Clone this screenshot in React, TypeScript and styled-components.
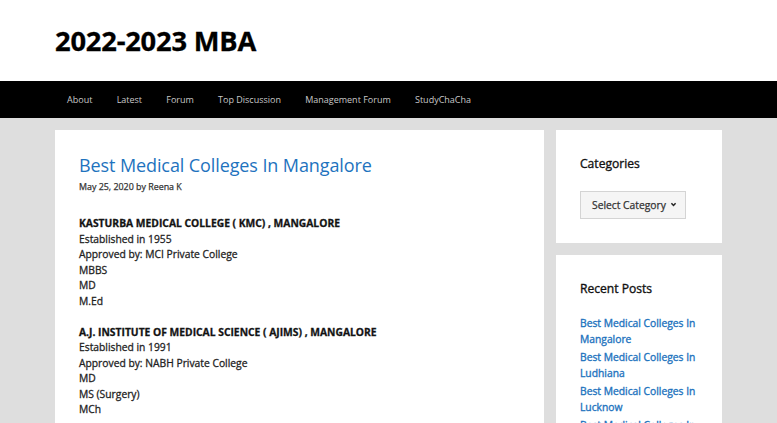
import React from "react";
import styled, { createGlobalStyle } from "styled-components";

const Global = createGlobalStyle`
  html, body { margin: 0; padding: 0; }
  body {
    background: #dedede;
    font-family: "Open Sans", "Liberation Sans", sans-serif;
    color: #222;
    overflow: hidden;
  }
  * { box-sizing: border-box; }
`;

const Header = styled.header`
  background: #fff;
  height: 81px;
  display: flex;
  align-items: center;
`;

const Inner = styled.div`
  width: 667px;
  margin: 0 auto;
`;

const SiteTitle = styled.h1`
  margin: 0;
  padding-top: 1px;
  font-size: 27.3px;
  font-weight: 700;
  line-height: 1;
  color: #000;
  letter-spacing: -0.2px;
  -webkit-text-stroke: 0.3px #000;
`;

const Nav = styled.nav`
  background: #000;
  height: 37px;
`;

const NavList = styled.ul`
  list-style: none;
  margin: 0 auto;
  padding: 0;
  width: 667px;
  display: flex;
  height: 100%;
  align-items: center;
`;

const NavItem = styled.li`
  padding: 0 12.1px;
  font-size: 9px;
  color: #c8c8c8;
  line-height: 37px;
`;

const Main = styled.div`
  width: 667px;
  margin: 12px auto 0;
  display: grid;
  grid-template-columns: 489px 166px;
  column-gap: 12px;
  align-items: start;
`;

const Article = styled.article`
  background: #fff;
  padding: 23.5px 24px 24px;
  min-height: 400px;
`;

const PostTitle = styled.h2`
  margin: 0;
  font-size: 18px;
  font-weight: 400;
  line-height: 22px;
  color: #1e73be;
  letter-spacing: -0.1px;
`;

const Meta = styled.div`
  margin-top: 4.5px;
  font-size: 8.9px;
  line-height: 13px;
  color: #333;
  -webkit-text-stroke: 0.25px #333;
`;

const Body = styled.div`
  margin-top: 23px;
  font-size: 10.3px;
  line-height: 15.5px;
  font-weight: 400;
  color: #1f1f1f;
  -webkit-text-stroke: 0.3px #1f1f1f;
`;

const Block = styled.p`
  margin: 0 0 15.5px;
`;

const Strong = styled.strong`
  font-weight: 700;
  display: block;
  color: #111;
`;

const Line = styled.span`
  display: block;
`;

const Sidebar = styled.aside`
  display: flex;
  flex-direction: column;
  gap: 12px;
`;

const Widget = styled.section`
  background: #fff;
  padding: 24px;
`;

const WidgetTitle = styled.h3`
  margin: 0 0 17px;
  font-size: 12.1px;
  line-height: 19.5px;
  font-weight: 400;
  color: #111;
  -webkit-text-stroke: 0.35px #111;
`;

const SelectBox = styled.div`
  width: 106px;
  height: 28px;
  border: 1px solid #d4d4d4;
  background: #f5f5f5;
  display: flex;
  align-items: center;
  justify-content: space-between;
  padding: 0 8px 0 11px;
  font-size: 10.3px;
  color: #333;
  -webkit-text-stroke: 0.25px #333;
`;

const PostList = styled.ul`
  list-style: none;
  margin: 0;
  padding: 0;
  display: flex;
  flex-direction: column;
  gap: 2px;
`;

const PostLink = styled.li`
  font-size: 10.3px;
  line-height: 16px;
  color: #1e73be;
  -webkit-text-stroke: 0.35px #1e73be;
`;

const navItems = ["About", "Latest", "Forum", "Top Discussion", "Management Forum", "StudyChaCha"];

const blocks = [
  {
    title: "KASTURBA MEDICAL COLLEGE ( KMC) , MANGALORE",
    lines: ["Established in 1955", "Approved by: MCI Private College", "MBBS", "MD", "M.Ed"],
  },
  {
    title: "A.J. INSTITUTE OF MEDICAL SCIENCE ( AJIMS) , MANGALORE",
    lines: ["Established in 1991", "Approved by: NABH Private College", "MD", "MS (Surgery)", "MCh"],
  },
];

const recent = [
  "Best Medical Colleges In Mangalore",
  "Best Medical Colleges In Ludhiana",
  "Best Medical Colleges In Lucknow",
  "Best Medical Colleges In Kolkata",
];

export default function App() {
  return (
    <>
      <Global />
      <Header>
        <Inner>
          <SiteTitle>2022-2023 MBA</SiteTitle>
        </Inner>
      </Header>
      <Nav>
        <NavList>
          {navItems.map((n) => (
            <NavItem key={n}>{n}</NavItem>
          ))}
        </NavList>
      </Nav>
      <Main>
        <Article>
          <PostTitle>Best Medical Colleges In Mangalore</PostTitle>
          <Meta>May 25, 2020 by Reena K</Meta>
          <Body>
            {blocks.map((b) => (
              <Block key={b.title}>
                <Strong>{b.title}</Strong>
                {b.lines.map((l, i) => (
                  <Line key={i}>{l}</Line>
                ))}
              </Block>
            ))}
          </Body>
        </Article>
        <Sidebar>
          <Widget>
            <WidgetTitle>Categories</WidgetTitle>
            <SelectBox>
              <span>Select Category</span>
              <svg width="7" height="5" viewBox="0 0 8 6">
                <path d="M1.5 1.6 L4 4.2 L6.5 1.6" fill="none" stroke="#222" strokeWidth="1.8" />
              </svg>
            </SelectBox>
          </Widget>
          <Widget>
            <WidgetTitle>Recent Posts</WidgetTitle>
            <PostList>
              {recent.map((r) => (
                <PostLink key={r}>{r}</PostLink>
              ))}
            </PostList>
          </Widget>
        </Sidebar>
      </Main>
    </>
  );
}
